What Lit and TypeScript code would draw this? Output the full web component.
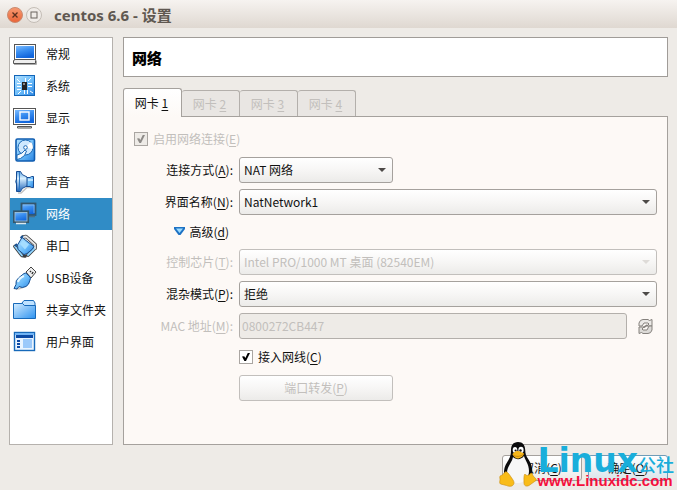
import { LitElement, html, svg, css } from "lit";
import { customElement, state } from "lit/decorators.js";
import { classMap } from "lit/directives/class-map.js";

const icons: Record<string, unknown> = {
  general: svg`
    <rect x="1.5" y="2.5" width="21" height="15" fill="#fff" stroke="#555"/>
    <rect x="3" y="4" width="18" height="12" fill="url(#blue)"/>
    <path d="M2.5 17.5h19l1 1v3h-22v-3z" fill="#eee" stroke="#555"/>
    <path d="M1 22.5h22.5v-4" fill="none" stroke="#aaa"/>`,
  system: svg`
    <rect x="1.5" y="1.5" width="20" height="20" fill="url(#sky)" stroke="#1265b8"/>
    <path d="M4 9.5h4M4 12.5h4M4 15.5h4M15 9.5h4M15 12.5h4M12.5 4v4M15 7l3-3M5 20l3-3M11.5 16v4M14.5 16v4M4 5l3 3M17 17l3 2" stroke="#fff" fill="none"/>
    <rect x="9" y="8" width="5" height="8" fill="#222"/><path d="M10 9h2v2h-2z" fill="#888"/>`,
  display: svg`
    <rect x="0.5" y="2.5" width="22" height="16" fill="#fff" stroke="#555"/>
    <rect x="2" y="4" width="19" height="13" fill="url(#blue)"/>
    <rect x="7" y="6" width="9" height="8" fill="none" stroke="#fff" stroke-width="1.4"/>
    <path d="M6 18.5h11M4.5 20.5h14v1.5h-14z" fill="#eee" stroke="#555"/>`,
  storage: svg`
    <rect x="3" y="1" width="18.5" height="22" rx="1.5" fill="url(#sky)" stroke="#0f5cb0" stroke-width="1.6"/>
    <circle cx="12.5" cy="9.5" r="7.5" fill="#cfe9ff" stroke="#1b68b5"/>
    <path d="M12.5 9.5L18 4a7.5 7.5 0 0 1 1.5 7z" fill="#fff"/>
    <circle cx="12.5" cy="9.5" r="1.8" fill="#fff" stroke="#1b68b5"/>
    <path d="M4 17l5-2 3-3 1.500 1-2 4.500-4 3-3.500 1z" fill="#f5fbff" stroke="#1b68b5"/>`,
  audio: svg`
    <path d="M5 23h3l6-5.500h7" fill="none" stroke="#c4c4c4" stroke-width="1.500"/>
    <path d="M13 7.500h4l1.500-1h2v11h-2l-1.500-1h-4z" fill="url(#sky)" stroke="#164c94"/>
    <path d="M3.500 1.500h4q.5 3.500 6.500 5.500v9q-6 2-6.500 5.500h-4z" fill="url(#cone)" stroke="#164c94"/>
    <path d="M3.500 9q-1.500 2.500 0 5" fill="#5ba5e6" stroke="#164c94"/>
    <path d="M6.500 2v19" fill="none" stroke="#2f79c4"/>
    <path d="M15 10h5" stroke="#d6efff" stroke-width="1.500"/>`,
  network: svg`
    <rect x="8.500" y="1.500" width="14" height="11.500" fill="url(#blue)" stroke="#34566c" stroke-width="1.800"/>
    <path d="M10 3h11v8" fill="none" stroke="#8fc1ea" stroke-width=".7"/>
    <path d="M16 14.500h6" stroke="#4c6f84" stroke-width="1.500"/>
    <rect x="1" y="9.500" width="14" height="10.500" fill="url(#blue)" stroke="#34566c" stroke-width="2.200"/>
    <rect x="2" y="10.500" width="12" height="8.500" fill="none" stroke="#a5cbe6" stroke-width=".8"/>
    <path d="M3 21.500h10" stroke="#dce8ef" stroke-width="1.500"/>`,
  serial: svg`
    <path d="M10 3l3-.500 9 8v4M2 12.500l7 9 3 .5M15 21l6-6" fill="none" stroke="#3d3d3d" stroke-width="3.600" stroke-linecap="round" stroke-linejoin="round"/>
    <path d="M10 3l3-.500 9 8v4" fill="none" stroke="#e8e8e8" stroke-width="1.800" stroke-linecap="round" stroke-linejoin="round"/>
    <path d="M2 12.500l7 9M15 21l6-6" fill="none" stroke="#8fd4ff" stroke-width="1.800" stroke-linecap="round"/>
    <path d="M9 3.500l12 9-2 3-5 4-3 1-6-5-.500-4.500z" fill="url(#sky)" stroke="#174f91"/>
    <path d="M7 10l3-4 6 4.500-4 5z" fill="#a5ddff"/>
    <path d="M2 12l2-2M7.500 4l2.500-2" stroke="#174f91" stroke-width="2"/>`,
  usb: svg`
    <path d="M3 23q7 0 12-6" stroke="#c4c4c4" stroke-width="1.600" fill="none"/>
    <path d="M13 6l5-5 5 5-5 6z" fill="#eee" stroke="#444" stroke-linejoin="round"/>
    <path d="M17 5l1 1M20 6l-1 2" stroke="#333" stroke-width="1.500"/>
    <path d="M1 22.500l2-4q-1-4 3-7l5-4q2-1 3 .500l3 3q1 1 0 3-1 5-4 6.500-4 2-7 0l-2 2.500z" fill="url(#sky)" stroke="#174f91"/>
    <path d="M5 16q1-4 6-6" stroke="#e8f8ff" stroke-width="2" fill="none"/>`,
  folders: svg`
    <path d="M9 5l2-2.500h9.500l1.500 2.500v3H9z" fill="#bfe2ff" stroke="#1769b9"/>
    <path d="M.5 5.500h9l2 2h11v13h-22z" fill="url(#folder)" stroke="#1769b9"/>`,
  ui: svg`
    <rect x="1.500" y="2.500" width="20" height="18" fill="#e9f4ff" stroke="#1769b9" stroke-width="1.400"/>
    <path d="M2 3h19v2H2z" fill="#70b4f5"/><path d="M3 5h17v3H3z" fill="#0c4aa5"/>
    <path d="M4 10h3v2H4zM4 13h3v2H4zM4 16h3v2H4z" fill="#0c4aa5"/>
    <rect x="10" y="9" width="9" height="9" fill="#9bc9fa"/>`,
};

const sections = [
  ["general", "常规"], ["system", "系统"], ["display", "显示"], ["storage", "存储"],
  ["audio", "声音"], ["network", "网络"], ["serial", "串口"], ["usb", "USB设备"],
  ["folders", "共享文件夹"], ["ui", "用户界面"],
];

@customElement("settings-icon")
class SettingsIcon extends LitElement {
  static properties = { name: {} };
  declare name: string;
  static styles = css`
    :host { display: block; width: 24px; height: 24px; flex: none; }
    svg { display: block; }
  `;
  render() {
    return html`<svg width="24" height="24" viewBox="0 0 24 24" fill="none" aria-hidden="true">
      <defs>
        <linearGradient id="blue" x1="0" y1="0" x2="0.4" y2="1"><stop stop-color="#7dbcff"/><stop offset=".5" stop-color="#388df0"/><stop offset="1" stop-color="#1266dc"/></linearGradient>
        <linearGradient id="sky" x1="0" y1="0" x2="1" y2="1"><stop stop-color="#b4e2ff"/><stop offset=".55" stop-color="#6bbcfa"/><stop offset="1" stop-color="#2a83e0"/></linearGradient>
        <linearGradient id="cone" x1="0" y1="0" x2="0" y2="1"><stop stop-color="#5ea5e6"/><stop offset=".35" stop-color="#d9f0ff"/><stop offset="1" stop-color="#1d62b8"/></linearGradient>
        <linearGradient id="folder" x1="0" y1="0" x2="1" y2="1"><stop stop-color="#d5edff"/><stop offset="1" stop-color="#2c92f0"/></linearGradient>
      </defs>
      ${icons[this.name]}
    </svg>`;
  }
}

@customElement("app-root")
class AppRoot extends LitElement {
  @state() private section = "network";

  static styles = css`
    :host {
      display: flex; flex-direction: column; min-height: 100vh; box-sizing: border-box;
      background: #eeebe7; color: #111; position: relative;
      font: 12px/18px "Noto Sans CJK SC", sans-serif;
    }
    * { box-sizing: border-box; }
    button, select, input { font: inherit; color: inherit; margin: 0; }
    u { text-underline-offset: 2px; text-decoration-thickness: 1px; }
    .titlebar {
      height: 28px; display: flex; align-items: center; gap: 3px; padding: 1px 7px 0;
      background: linear-gradient(#f6f3f0, #dfd8d1);
    }
    .win { width: 16px; height: 16px; padding: 0; border: 0; background: none; }
    .win svg { display: block; }
    .title { margin: 0 0 0 9px; font: bold 15px/20px "Noto Sans", "Noto Sans CJK SC", sans-serif; color: #5f5851; }
    .body { flex: 1; display: flex; gap: 10px; padding: 9px 9px 0; }
    .side { width: 104px; flex: none; border: 1px solid #b5b1ad; background: #fff; }
    .item {
      display: flex; align-items: center; gap: 9px; width: 100%; height: 32px;
      padding: 0 0 0 3px; border: 0; background: none; white-space: nowrap; text-align: left;
    }
    .item.on { background: #308cc6; color: #fff; }
    .main { flex: 1; min-width: 0; display: flex; flex-direction: column; }
    .heading {
      margin: 0 0 11px; height: 40px; padding: 0 8px; border: 1px solid #a09c98; background: #fff;
      font-size: 15px; line-height: 40px; font-weight: 900; color: #000;
    }
    .tabs { display: flex; align-items: flex-end; height: 28px; }
    .tab {
      width: 58px; height: 26px; padding: 0 2px 0 0; border: 1px solid #b3afab; border-left: 0; border-bottom: 0;
      border-radius: 3px 3px 0 0; background: #e9e6e3; color: #c2bfbc;
    }
    .tab.on {
      width: 59px; height: 29px; margin-bottom: -1px; border-left: 1px solid #a5a19d; border-color: #a5a19d;
      background: linear-gradient(#fff, #fdf9f6); color: #111; z-index: 1;
    }
    .panel { flex: 1; border: 1px solid #a5a19d; background: #fdf9f6; padding: 13px 10px 42px; }
    .check { display: flex; align-items: center; gap: 5px; }
    .check input {
      appearance: none; width: 14px; height: 14px; border: 1px solid #aaa6a2; background: #fff;
      display: grid; place-items: center;
    }
    .check input:checked::before {
      content: ""; width: 8px; height: 8px; background: #000;
      clip-path: polygon(0 45%, 28% 40%, 42% 62%, 72% 0, 100% 0, 50% 100%, 30% 100%);
    }
    .check input:disabled { background: #eeebe7; }
    .check input:disabled::before { background: #8e8b88; }
    .dim { color: #c2bfbc; }
    .form {
      display: grid; grid-template-columns: 99px minmax(0, 1fr); column-gap: 6px; row-gap: 6px;
      grid-template-rows: 26px 26px 22px 26px 26px 26px 24px 26px; align-items: center; margin-top: 9px;
    }
    .label { text-align: right; white-space: nowrap; }
    .combo { position: relative; }
    .combo::after {
      content: ""; position: absolute; right: 7px; top: 11px; width: 8px; height: 4px;
      background: #4d4a48; clip-path: polygon(0 0, 100% 0, 50% 100%); pointer-events: none;
    }
    .combo.off::after { background: #dedbd8; }
    select, .push {
      display: block; width: 100%; height: 26px; border: 1px solid #a5a19d; border-radius: 3px;
      background: linear-gradient(#fff, #f7f6f5 50%, #ecebe9); color: #111;
    }
    select { appearance: none; padding: 0 20px 0 4px; }
    select:disabled, .push:disabled { opacity: 1; color: #c2bfbc; border-color: #c2bfbc; }
    .push { padding: 0; }
    .short, .push.short { width: 154px; }
    .toggle {
      justify-self: end; grid-column: 1; margin-right: 4px; display: flex; align-items: center; gap: 4px;
      padding: 0; border: 0; background: none;
    }
    .mac { display: flex; align-items: center; gap: 8px; }
    .mac input {
      flex: 1; min-width: 0; height: 26px; padding: 0 2px 2px; border: 1px solid #b3afab; border-radius: 3px;
      background: #eeebe7; color: #c2bfbc;
    }
    .refresh { width: 22px; height: 22px; padding: 2px; border: 0; background: none; }
    .refresh svg { display: block; }
    .second { grid-column: 2; }
    .footer { display: flex; justify-content: flex-end; gap: 6px; padding: 10px 9px 9px; }
    .footer .push { width: 80px; }
    .footer .ok { border-color: #6f9cb8; background: linear-gradient(#fff, #d9e4ea); }
    .mark { position: absolute; right: 3px; bottom: 0; display: flex; align-items: flex-end; pointer-events: none; }
    .mark svg { display: block; margin-bottom: 3px; }
    .words { white-space: nowrap; }
    .brand { display: flex; align-items: baseline; height: 26px; color: #19aedb; }
    .linux { font: bold 33px/30px "DejaVu Sans", sans-serif; }
    .club { font: 500 18px/26px "Noto Sans CJK SC", sans-serif; }
    .site { font: bold 15px/18px "Liberation Sans", sans-serif; color: #f5103c; }
  `;

  private combo(id: string, value: string, off = false, short = false) {
    return html`<div class=${classMap({ combo: true, off, short })}>
      <select id=${id} ?disabled=${off}><option>${value}</option></select>
    </div>`;
  }

  render() {
    return html`
      <header class="titlebar">
        <button class="win" aria-label="关闭"><svg width="16" height="16" viewBox="0 0 16 16">
          <defs><linearGradient id="o" x2="0" y2="1"><stop stop-color="#f79a72"/><stop offset="1" stop-color="#ea6336"/></linearGradient></defs>
          <circle cx="8" cy="8" r="7.5" fill="url(#o)" stroke="#c98a70"/><path d="M5.5 5.5l5 5M10.5 5.5l-5 5" stroke="#5a2f1e" stroke-width="1.3"/></svg></button>
        <button class="win" aria-label="最大化"><svg width="16" height="16" viewBox="0 0 16 16">
          <circle cx="8" cy="8" r="7.5" fill="#f0ece8" stroke="#c4bdb6"/><rect x="5" y="5" width="6" height="6" fill="none" stroke="#6b655f"/></svg></button>
        <h1 class="title">centos 6.6 - 设置</h1>
      </header>
      <div class="body">
        <nav class="side">
          ${sections.map(([id, text]) => html`
            <button class=${classMap({ item: true, on: this.section === id })} @click=${() => (this.section = id)}>
              <settings-icon .name=${id}></settings-icon><span>${text}</span>
            </button>`)}
        </nav>
        <main class="main">
          <h2 class="heading">网络</h2>
          <div class="tabs" role="tablist">
            ${[1, 2, 3, 4].map((n) => html`<button role="tab" class=${classMap({ tab: true, on: n === 1 })}
              aria-selected=${n === 1} ?disabled=${n > 1}>网卡 <u>${n}</u></button>`)}
          </div>
          <section class="panel">
            <label class="check dim"><input type="checkbox" checked disabled><span>启用网络连接(<u>E</u>)</span></label>
            <div class="form">
              <label class="label" for="attach">连接方式(<u>A</u>):</label>
              ${this.combo("attach", "NAT 网络", false, true)}
              <label class="label" for="name">界面名称(<u>N</u>):</label>
              ${this.combo("name", "NatNetwork1")}
              <button class="toggle" aria-expanded="true">
                <svg width="11" height="10" viewBox="0 0 11 10" aria-hidden="true"><path d="M0 0h11v2L6.500 8h-2L0 2z" fill="#1d72c4"/><path d="M2 1.500h7L5.500 6z" fill="#9ddcff"/></svg>
                <span>高级(<u>d</u>)</span>
              </button>
              <span></span>
              <label class="label dim" for="chip">控制芯片(<u>T</u>):</label>
              ${this.combo("chip", "Intel PRO/1000 MT 桌面 (82540EM)", true)}
              <label class="label" for="promisc">混杂模式(<u>P</u>):</label>
              ${this.combo("promisc", "拒绝")}
              <label class="label dim" for="mac">MAC 地址(<u>M</u>):</label>
              <div class="mac">
                <input id="mac" value="0800272CB447" disabled>
                <button class="refresh" aria-label="刷新" disabled><svg width="17" height="17" viewBox="0 0 17 17" fill="none">
                  <path d="M2 8V5q1-3.500 4-3.500h5l1.500 1L15 1.500V8h-5l2-2-1-1H7L5 8z" fill="#ebe9e6" stroke="#85817d"/>
                  <path d="M15 8v4q-1 3.500-4 3.500H6l-1.500-1L2 15.500V9h5l-2 2 1 1h4l2-4z" fill="#dcdad7" stroke="#85817d"/>
                  <path d="M6.500 9.500l4-2.500" stroke="#85817d" stroke-width="1.500"/></svg></button>
              </div>
              <label class="check second"><input type="checkbox" checked><span>接入网线(<u>C</u>)</span></label>
              <button class="push short second" disabled>端口转发(<u>P</u>)</button>
            </div>
          </section>
        </main>
      </div>
      <footer class="footer">
        <button class="push">取消(<u>C</u>)</button>
        <button class="push ok">确定(<u>O</u>)</button>
      </footer>
      <div class="mark">
        <svg width="38" height="45" viewBox="0 0 38 45" aria-hidden="true">
          <path d="M19 0c5 0 7 3.5 7.2 8 .2 4 .8 6 3.300 9.500C32.500 22 34 27 33 33l-3 5H8l-3-7c0-6 2-9 4.500-13 2-3.500 2.500-6 2.500-9.500C12 3.500 14 0 19 0z" fill="#0b0b0c"/>
          <path d="M14 15c3 3 8 3 11-1 1 4 5 8 5 15 0 6-4 12-11 12S8 37 8 31c0-7 5-10 6-16z" fill="#f7f7f7"/>
          <ellipse cx="16" cy="8" rx="2.300" ry="3" fill="#fff"/><ellipse cx="22" cy="8" rx="2.600" ry="3.200" fill="#fff"/>
          <circle cx="16.600" cy="8.500" r="1.100" fill="#111"/><circle cx="21.500" cy="8.500" r="1.200" fill="#111"/>
          <path d="M13.500 12c2-2.500 4-3 5.500-3s4 1.500 6 2.500c0 2.500-4 5-6 5s-5-2-5.500-4.500z" fill="#f6b71b"/>
          <path d="M14 13c3 2 7 2 11-1" fill="none" stroke="#b87908" stroke-width=".7"/>
          <path d="M6 30c2-1 4 2 6 5s4 5 2.500 7.500c-1.500 2.500-5 2-7 1L1.500 42C0 41 1 39 1 37.500S0 34 2 33.500 5 31 6 30z" fill="#f9bc19" stroke="#c98d10" stroke-width=".6"/>
          <path d="M26 32c1 2 4 2 6-1 1.500 0 1.500 2.500 3 4s3 2 2 3.500L30 43.500c-3 1.500-5 0-5-2.500s-.5-8 1-9z" fill="#f9bc19" stroke="#c98d10" stroke-width=".6"/>
        </svg>
        <div class="words">
          <div class="brand"><span class="linux">Linux</span><span class="club">公社</span></div>
          <div class="site">www.Linuxidc.com</div>
        </div>
      </div>`;
  }
}
